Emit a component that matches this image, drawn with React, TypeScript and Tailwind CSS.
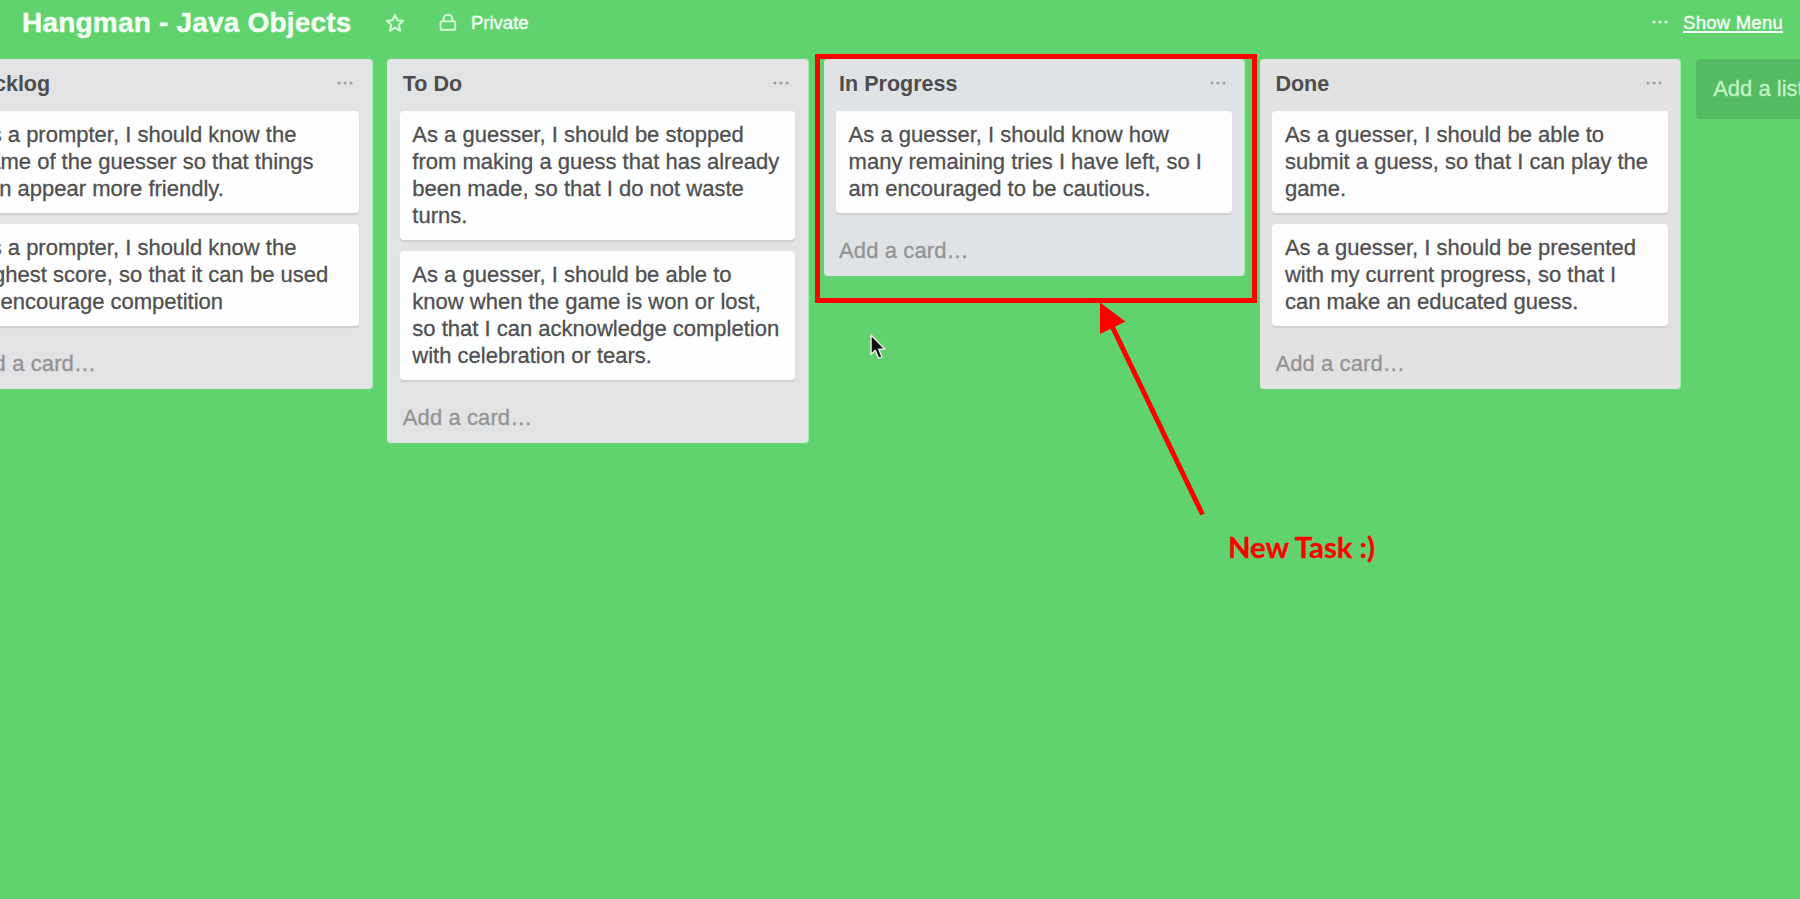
import React from "react";

type ListData = {
  title: string;
  tone: string;
  cardTone: string;
  cards: string[][];
};

const lists: ListData[] = [
  {
    title: "Backlog",
    tone: "bg-[#e3e2e4]",
    cardTone: "bg-[#fefefe]",
    cards: [
      ["As a prompter, I should know the", "name of the guesser so that things", "can appear more friendly."],
      ["As a prompter, I should know the", "highest score, so that it can be used", "to encourage competition"],
    ],
  },
  {
    title: "To Do",
    tone: "bg-[#e2e3e4]",
    cardTone: "bg-[#fdfefe]",
    cards: [
      ["As a guesser, I should be stopped", "from making a guess that has already", "been made, so that I do not waste", "turns."],
      ["As a guesser, I should be able to", "know when the game is won or lost,", "so that I can acknowledge completion", "with celebration or tears."],
    ],
  },
  {
    title: "In Progress",
    tone: "bg-[#e0e3e6]",
    cardTone: "bg-[#fdfdfe]",
    cards: [["As a guesser, I should know how", "many remaining tries I have left, so I", "am encouraged to be cautious."]],
  },
  {
    title: "Done",
    tone: "bg-[#e3e2e3]",
    cardTone: "bg-[#fefdfd]",
    cards: [
      ["As a guesser, I should be able to", "submit a guess, so that I can play the", "game."],
      ["As a guesser, I should be presented", "with my current progress, so that I", "can make an educated guess."],
    ],
  },
];

function Dots({ className }: { className: string }) {
  return (
    <svg width="16" height="4" viewBox="0 0 16 4" className={className} fill="currentColor">
      <circle cx="2" cy="2" r="1.6" />
      <circle cx="8" cy="2" r="1.6" />
      <circle cx="14" cy="2" r="1.6" />
    </svg>
  );
}

function List({ list }: { list: ListData }) {
  return (
    <section className={`w-[420.5px] shrink-0 rounded-[4px] px-[12.5px] shadow-[1px_0_1px_#a8f3b4] ${list.tone}`}>
      <header className="flex h-[52.5px] items-start justify-between pl-[3px] pr-[6px]">
        <h2 className="pt-[11px] text-[21.5px] font-bold leading-[28px] text-[#4d4d4d]">{list.title}</h2>
        <Dots className="mt-[22.5px] text-[#a0a0a2]" />
      </header>
      <div className="flex flex-col gap-[11px]">
        {list.cards.map((lines) => (
          <article
            key={lines.join(" ")}
            className={`rounded-[4px] px-[12.5px] pb-[11px] pt-[10px] text-[22px] leading-[27px] text-[#505051] shadow-[0_1.5px_1px_#cfcfd1] [-webkit-text-stroke:0.3px_#505051] ${list.cardTone}`}
          >
            {lines.map((line) => (
              <p key={line} className="whitespace-nowrap">
                {line}
              </p>
            ))}
          </article>
        ))}
      </div>
      <p className="pb-[10.5px] pl-[3px] pt-[24px] text-[22px] leading-[28px] tracking-[0.1px] text-[#929394] [-webkit-text-stroke:0.3px_#929394]">
        Add a card…
      </p>
    </section>
  );
}

export default function App() {
  return (
    <div className="relative flex h-[899px] w-[1800px] flex-col overflow-hidden bg-[#61d36e] font-['Liberation_Sans',Arial,sans-serif]">
      <header className="flex h-[58.5px] shrink-0 items-start justify-between pl-[22px] pr-[17px] text-[#f4fff5]">
        <div className="flex items-start">
          <h1 className="w-[363px] whitespace-nowrap pt-[7px] text-[28px] font-bold leading-[32px] tracking-[0.2px] [-webkit-text-stroke:0.4px_#f4fff5]">
            Hangman - Java Objects
          </h1>
          <svg width="20" height="20" viewBox="0 0 20 20" className="mt-[13px] text-[#d8fadc]" fill="none" stroke="currentColor" strokeWidth="2" strokeLinejoin="round">
            <path d="M10 1.8 12.3 7.2 18.2 7.8 13.8 11.7 15.1 17.8 10 14.7 4.9 17.8 6.2 11.7 1.8 7.8 7.7 7.2Z" />
          </svg>
          <svg width="18" height="18" viewBox="0 0 18 18" className="ml-[34px] mt-[13px] text-[#d0f9d5]" fill="none" stroke="currentColor" strokeWidth="2">
            <rect x="1.6" y="8.2" width="14.6" height="8.6" rx="1.6" />
            <path d="M4.4 8V6.2a4.5 4.5 0 0 1 9 0V8" />
          </svg>
          <span className="ml-[14px] pt-[10px] text-[18.5px] leading-[26px] [-webkit-text-stroke:0.4px_#f4fff5]">Private</span>
        </div>
        <div className="flex items-start">
          <Dots className="mt-[20px] text-[#e0fbe3]" />
          <a className="ml-[15px] pt-[10px] text-[18.5px] leading-[26px] tracking-[0.25px] underline decoration-[1.5px] underline-offset-2 [-webkit-text-stroke:0.4px_#f4fff5]">
            Show Menu
          </a>
        </div>
      </header>

      <main className="-ml-[49px] flex items-start gap-[15.8px]">
        {lists.map((list) => (
          <List key={list.title} list={list} />
        ))}
        <div className="h-[60px] w-[420px] shrink-0 whitespace-nowrap rounded-[4px] bg-[#54bb60] pl-[17px] pt-[16.5px] text-[22px] leading-[28px] text-[#c3f3c9] [-webkit-text-stroke:0.3px_#c3f3c9]">
          Add a list…
        </div>
      </main>

      <div className="absolute left-[815px] top-[54px] h-[249px] w-[442px] border-5 border-[#ff0000]" />
      <svg className="absolute left-[1090px] top-[295px]" width="130" height="230" viewBox="1090 295 130 230">
        <path d="M1100 302.5 1125.5 321.5 1100 334Z" fill="#f00" />
        <path d="M1112 326 1202.5 514.5" stroke="#f00" strokeWidth="5" />
      </svg>
      <p className="absolute left-[1228px] top-[529px] whitespace-nowrap font-[Lato,sans-serif] text-[29.3px] font-bold leading-[36px] text-[#ff0000] [-webkit-text-stroke:0.3px_#ff0000]">
        New Task :)
      </p>
      <svg className="absolute left-[868px] top-[332px]" width="22" height="32" viewBox="0 0 22 32">
        <path d="M3 3V22.5L7.3 18.4 10.6 26.3 14 24.9 10.8 17.3H17Z" fill="#101010" stroke="#e9e4e8" strokeWidth="1.5" strokeLinejoin="round" />
      </svg>
    </div>
  );
}
